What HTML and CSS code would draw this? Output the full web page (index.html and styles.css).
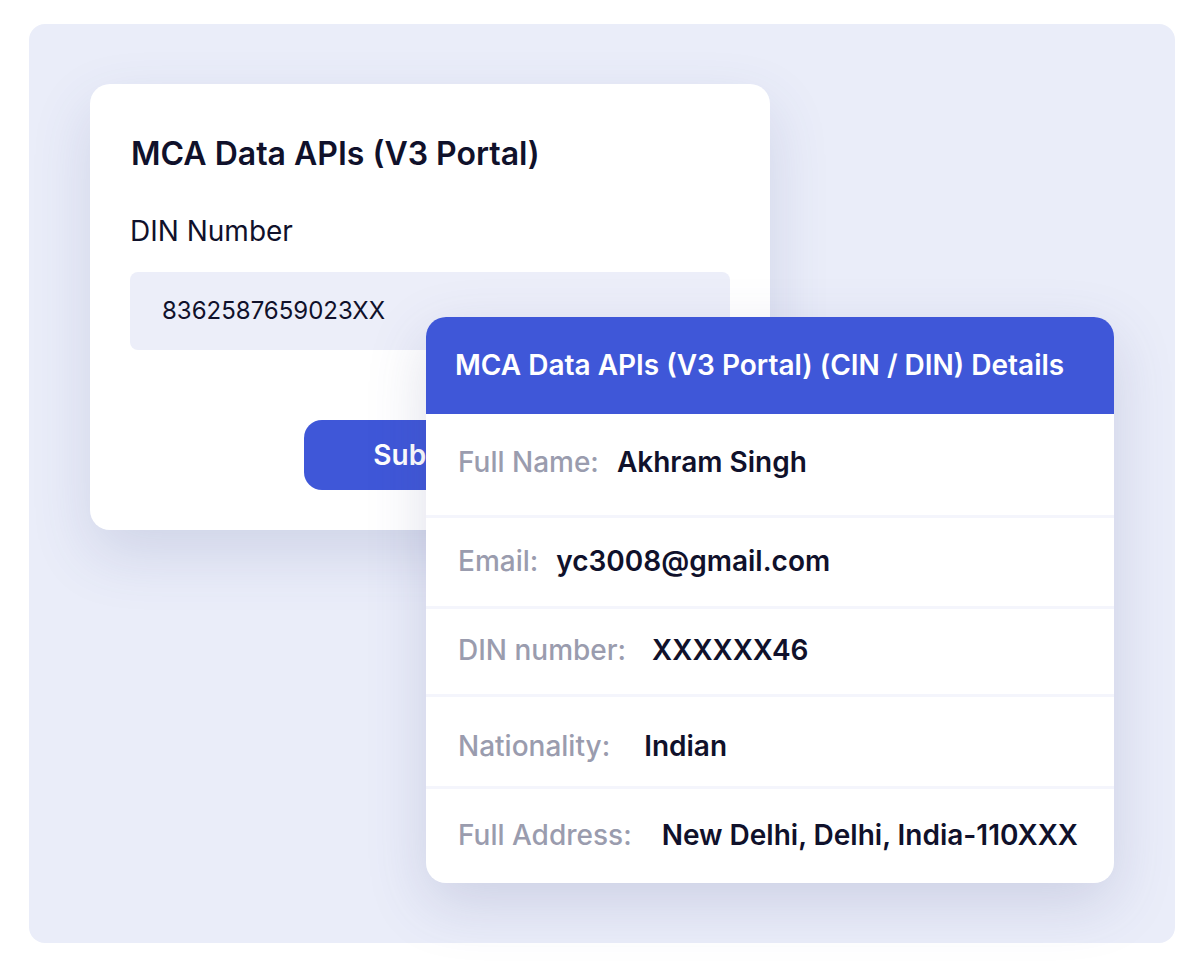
FILE: index.html
```html
<!DOCTYPE html>
<html lang="en">
<head>
    <meta charset="UTF-8">
    <meta name="viewport" content="width=device-width,initial-scale=1.0">
    <title>MCA Data APIs</title>
    <link rel="stylesheet" href="styles.css">
</head>
<body>
    <div class="stage">
        <div class="panel">
            <section class="form-card">
                <h2>MCA Data APIs (V3 Portal)</h2>
                <label class="field-label">DIN Number</label>
                <div class="field">8362587659023XX</div>
                <div class="actions">
                    <button class="submit">Submit</button>
                </div>
            </section>

            <section class="result-card">
                <header>MCA Data APIs (V3 Portal) (CIN / DIN) Details</header>
                <ul class="rows">
                    <li class="r1"><span class="label">Full Name:</span><span class="value">Akhram Singh</span></li>
                    <li class="r2"><span class="label">Email:</span><span class="value">yc3008@gmail.com</span></li>
                    <li class="r3"><span class="label">DIN number:</span><span class="value">XXXXXX46</span></li>
                    <li class="r4"><span class="label">Nationality:</span><span class="value">Indian</span></li>
                    <li class="r5"><span class="label">Full Address:</span><span class="value">New Delhi, Delhi, India-110XXX</span></li>
                </ul>
            </section>
        </div>
    </div>
</body>
</html>
```

FILE: styles.css
```css
html, body { margin: 0; background: #fff; }
body { font-family: Inter, "Noto Sans", sans-serif; color: #10112b; }

.stage { padding: 24px 29px 37px; }
.panel { position: relative; height: 919px; background: #eaedf9; border-radius: 16px; padding: 60px 0 0 61px; box-sizing: border-box; }

/* left form card */
.form-card { width: 680px; height: 446px; box-sizing: border-box; padding: 50px 40px 0 40px; background: #fff; border-radius: 20px; box-shadow: 0 24px 60px rgba(70, 80, 140, 0.16); }
.form-card h2 { margin: 0 0 0 1px; font-size: 32px; font-weight: 600; line-height: 40px; }
.field-label { display: block; margin-top: 39px; font-size: 28px; font-weight: 400; line-height: 36px; }
.field { margin-top: 23px; height: 78px; background: #eceef9; border-radius: 8px; padding-left: 32px; font-size: 24px; line-height: 78px; }
.actions { margin-top: 70px; padding-left: 174px; }
.submit { width: 234px; height: 70px; border: none; border-radius: 18px; background: #3f57d8; color: #fff; font-family: inherit; font-size: 28px; font-weight: 600; }

/* right details card */
.result-card { position: absolute; left: 397px; top: 293px; width: 688px; background: #fff; border-radius: 20px; overflow: hidden; box-shadow: 0 20px 60px rgba(70, 80, 140, 0.18); }
.result-card header { height: 97px; background: #3f57d8; color: #fff; font-size: 28px; font-weight: 600; line-height: 97px; padding-left: 29px; }

.rows { list-style: none; margin: 0; padding: 0; }
.rows li { display: flex; align-items: center; gap: 18px; padding-left: 32px; box-sizing: border-box; border-top: 3px solid #f4f5fc; }
.rows .r1 { border-top: none; height: 101px; padding-bottom: 6px; }
.rows .r2 { height: 91px; padding-bottom: 3px; }
.rows .r3 { height: 88px; padding-bottom: 3px; gap: 26px; }
.rows .r4 { height: 92px; padding-top: 8px; gap: 34px; }
.rows .r5 { height: 97px; padding-bottom: 2px; gap: 30px; }
.label { font-size: 28px; font-weight: 500; color: #9a9cae; }
.value { font-size: 28px; font-weight: 600; color: #10112b; }
```
